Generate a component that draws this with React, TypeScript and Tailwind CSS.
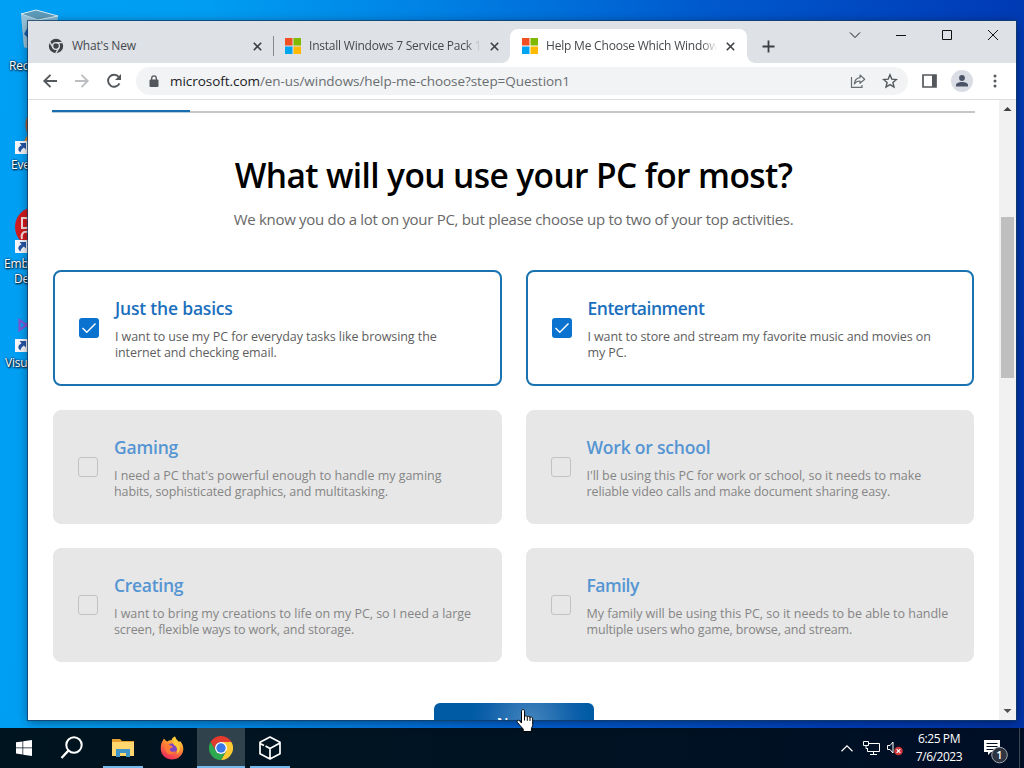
import { ReactNode } from "react";
import clsx from "clsx";

interface Activity {
  title: string;
  lines: string[];
  checked?: boolean;
  titleClass: string;
  lineClasses: string[];
}

const activities: Activity[] = [
  {
    title: "Just the basics",
    lines: ["I want to use my PC for everyday tasks like browsing the", "internet and checking email."],
    checked: true,
    titleClass: "tracking-[-0.2px]",
    lineClasses: ["tracking-[-0.07px]", "tracking-[-0.1px]"],
  },
  {
    title: "Entertainment",
    lines: ["I want to store and stream my favorite music and movies on", "my PC."],
    checked: true,
    titleClass: "tracking-[-0.5px]",
    lineClasses: ["tracking-[-0.1px]", "tracking-[-0.1px]"],
  },
  {
    title: "Gaming",
    lines: ["I need a PC that's powerful enough to handle my gaming", "habits, sophisticated graphics, and multitasking."],
    titleClass: "tracking-[-0.2px]",
    lineClasses: ["tracking-[-0.03px]", "tracking-[-0.11px]"],
  },
  {
    title: "Work or school",
    lines: ["I'll be using this PC for work or school, so it needs to make", "reliable video calls and make document sharing easy."],
    titleClass: "tracking-[-0.2px]",
    lineClasses: ["tracking-[-0.04px]", "tracking-[-0.11px]"],
  },
  {
    title: "Creating",
    lines: ["I want to bring my creations to life on my PC, so I need a large", "screen, flexible ways to work, and storage."],
    titleClass: "tracking-[-0.3px]",
    lineClasses: ["tracking-[-0.02px]", "tracking-[-0.13px]"],
  },
  {
    title: "Family",
    lines: ["My family will be using this PC, so it needs to be able to handle", "multiple users who game, browse, and stream."],
    titleClass: "tracking-[-0.5px]",
    lineClasses: ["tracking-[-0.02px]", "tracking-[-0.15px]"],
  },
];

function MicrosoftLogo() {
  return (
    <svg width="16" height="16" viewBox="0 0 16 16" className="shrink-0">
      <rect width="7.5" height="7.5" fill="#f25022" />
      <rect x="8.5" width="7.5" height="7.5" fill="#7fba00" />
      <rect y="8.5" width="7.5" height="7.5" fill="#00a4ef" />
      <rect x="8.5" y="8.5" width="7.5" height="7.5" fill="#ffb900" />
    </svg>
  );
}

function ChromeMono() {
  return (
    <svg width="16" height="16" viewBox="0 0 16 16" className="shrink-0">
      <circle cx="8" cy="8" r="7.2" fill="#3f4347" />
      <circle cx="8" cy="8" r="3.4" fill="none" stroke="#dee1e6" strokeWidth="1.3" />
      <path d="M8 4.6h6.6M5.05 9.7L1.8 4.1M10.95 9.7L7.7 15.3" stroke="#dee1e6" strokeWidth="1.3" />
    </svg>
  );
}

function ChromeColor() {
  return (
    <svg width="24" height="24" viewBox="0 0 24 24">
      <path d="M12 6H22.4A12 12 0 0 1 12 24L17.2 15Z" fill="#fcc934" />
      <path d="M1.6 6A12 12 0 0 1 22.4 6H12A6 6 0 0 0 6.8 15Z" fill="#e33b2e" />
      <path d="M1.6 6L6.8 15A6 6 0 0 0 17.2 15L12 24A12 12 0 0 1 1.6 6Z" fill="#2da94f" />
      <circle cx="12" cy="12" r="6" fill="#fff" />
      <circle cx="12" cy="12" r="4.7" fill="#3b78e7" />
    </svg>
  );
}

function CloseIcon() {
  return (
    <svg width="9" height="9" viewBox="0 0 9 9" className="shrink-0">
      <path d="M.8.8l7.4 7.4M8.2.8L.8 8.2" stroke="#3c4043" strokeWidth="1.6" />
    </svg>
  );
}

function Tab({ icon, title, className, fade }: { icon: ReactNode; title: ReactNode; className: string; fade?: boolean }) {
  return (
    <div className={clsx("flex items-center h-[34px] text-[12px] text-[#45494d]", className)}>
      {icon}
      <div
        className={clsx(
          "ml-2 flex-1 overflow-hidden whitespace-nowrap",
          fade && "[mask-image:linear-gradient(to_right,black_91%,transparent)]"
        )}
      >
        {title}
      </div>
      <div className="ml-[9px]">
        <CloseIcon />
      </div>
    </div>
  );
}

function TabStrip() {
  return (
    <div className="relative flex h-[42px] bg-[#dee1e6] pt-2">
      <Tab className="w-[245px] pl-5 pr-[11px]" icon={<ChromeMono />} title={<span className="tracking-[-0.22px]">What's New</span>} />
      <div className="mt-[7px] h-5 w-px bg-[#85888d]" />
      <Tab
        className="w-[236px] pl-[11px] pr-[11px]"
        fade
        icon={<MicrosoftLogo />}
        title={<span className="tracking-[-0.22px]">Install Windows 7 Service Pack 1 (SP1)</span>}
      />
      <div className="relative rounded-t-lg bg-white">
        <Tab
          className="w-[237px] pl-3 pr-3"
          fade
          icon={<MicrosoftLogo />}
          title={<span className="tracking-[-0.2px]">Help Me Choose Which Windows</span>}
        />
        <div className="absolute bottom-0 -left-2 size-2 bg-[radial-gradient(circle_at_0_0,transparent_7.5px,white_8px)]" />
        <div className="absolute bottom-0 -right-2 size-2 bg-[radial-gradient(circle_at_100%_0,transparent_7.5px,white_8px)]" />
      </div>
      <svg width="13" height="13" viewBox="0 0 13 13" className="ml-[15px] mt-[11px]">
        <path d="M6.5.5v12M.5 6.5h12" stroke="#3c4043" strokeWidth="1.8" />
      </svg>
      <svg width="160" height="14" viewBox="0 0 160 14" className="ml-[72px] -mt-px" fill="none" stroke="#111">
        <path d="M3 4.5l5 5 5-5" />
        <path d="M49 7.5h10" />
        <path d="M95.5 2.5h9v9h-9z" />
        <path d="M141 2l10 10M151 2l-10 10" />
      </svg>
    </div>
  );
}

function Toolbar() {
  return (
    <div className="flex h-[37px] items-center border-b border-[#dcdee0] bg-white">
      <svg width="80" height="16" viewBox="0 0 80 16" className="ml-[14px] shrink-0" fill="none" strokeWidth="1.9">
        <path d="M15 8H2.5M8.5 1.8L2.3 8l6.2 6.2" stroke="#54585c" />
        <path d="M33 8h12.5M39.5 1.8L45.7 8l-6.2 6.2" stroke="#bcbec1" />
        <path d="M77.5 10.3A6 6 0 1 1 76.8 4" stroke="#54585c" />
        <path d="M79 1v6h-6z" fill="#54585c" stroke="none" />
      </svg>
      <div className="ml-[14px] flex h-7 w-[772px] items-center rounded-full bg-[#f1f3f4] pl-[13px] pr-[10px]">
        <svg width="10" height="13" viewBox="0 0 10 13">
          <rect x=".5" y="4.5" width="9" height="7.5" rx="1" fill="#54585c" />
          <path d="M2.7 5V3.2a2.3 2.3 0 0 1 4.6 0V5" fill="none" stroke="#54585c" strokeWidth="1.3" />
        </svg>
        <div className="ml-[11px] flex-1 whitespace-nowrap text-[13.5px] tracking-[-0.05px] text-[#6a6e72]">
          <span className="text-[#202124]">microsoft.com</span>/en-us/windows/help-me-choose?step=Question1
        </div>
        <svg width="16" height="16" viewBox="0 0 16 16" fill="none" stroke="#6a6e72" strokeWidth="1.2">
          <path d="M1.5 4v10.400H12V12" />
          <path d="M10 2l4.700 4.200L10 10.300V8C7.300 8 5.500 9 4.300 11c.3-3.500 2.200-6 5.700-6.400z" strokeLinejoin="round" />
        </svg>
        <svg width="16" height="16" viewBox="0 0 16 16" className="ml-4" fill="none" stroke="#54585c" strokeWidth="1.4">
          <path d="M8 1.800l1.800 4.300 4.600.4-3.500 3 1.100 4.500L8 11.600 4 14l1.100-4.500-3.500-3 4.600-.4z" />
        </svg>
      </div>
      <svg width="15" height="14" viewBox="0 0 15 14" className="ml-[14px]">
        <path d="M1 1h13v12H1z" fill="none" stroke="#54585c" strokeWidth="1.7" />
        <path d="M10 1h4v12h-4z" fill="#54585c" />
      </svg>
      <div className="ml-[14px] flex size-[22px] items-center justify-center rounded-full bg-[#dadde5]">
        <svg width="14" height="14" viewBox="0 0 14 14" fill="#4b5467">
          <circle cx="7" cy="4" r="2.9" />
          <path d="M1 12.500V11c0-2 3-3 6-3s6 1 6 3v1.500z" />
        </svg>
      </div>
      <svg width="4" height="14" viewBox="0 0 4 14" className="ml-5" fill="#54585c">
        <circle cx="2" cy="2" r="1.5" />
        <circle cx="2" cy="7" r="1.5" />
        <circle cx="2" cy="12" r="1.5" />
      </svg>
    </div>
  );
}

function ActivityCard({ activity }: { activity: Activity }) {
  const { title, lines, checked, titleClass, lineClasses } = activity;

  return (
    <div
      className={clsx(
        "flex items-center gap-4 rounded-lg px-6 py-6",
        checked ? "border-2 border-[#1a73b0] bg-white" : "border border-[#e7e7e7] bg-[#e7e7e7]"
      )}
    >
      {checked ? (
        <div className="flex size-5 shrink-0 items-center justify-center rounded-[3px] bg-[#0a73cf]">
          <svg width="16" height="12" viewBox="0 0 16 12">
            <path d="M1.500 6l4.300 4.300L14.500 1.500" fill="none" stroke="#fff" strokeWidth="1.4" />
          </svg>
        </div>
      ) : (
        <div className="size-5 shrink-0 rounded-[3px] border border-[#c2c2c2]" />
      )}
      <div className="whitespace-nowrap">
        <h2 className={clsx("text-[17.5px]/6 font-semibold", checked ? "text-[#1b6fbd]" : "text-[#5595d3]")}>
          <span className={titleClass}>{title}</span>
        </h2>
        <p className={clsx("-mb-px mt-[9px] text-[12.5px]/4", checked ? "text-[#5e5e5e]" : "text-[#858585]")}>
          {lines.map((line, i) => (
            <span key={line} className={clsx("block w-fit", lineClasses[i])}>
              {line}
            </span>
          ))}
        </p>
      </div>
    </div>
  );
}

function Scrollbar() {
  return (
    <div className="flex w-[17px] shrink-0 flex-col items-center bg-[#f1f1f1]">
      <svg width="17" height="17" viewBox="0 0 17 17">
        <path d="M4.500 11L8.500 7l4 4z" fill="#404040" />
      </svg>
      <div className="mt-[100px] h-[161px] w-[13px] bg-[#bfbfbf]" />
      <svg width="17" height="17" viewBox="0 0 17 17" className="mt-auto">
        <path d="M4.500 6L8.500 10l4-4z" fill="#505050" />
      </svg>
    </div>
  );
}

function BrowserWindow() {
  return (
    <div className="relative ml-7 mr-2 flex h-[699px] flex-col bg-white shadow-[0_0_0_1px_rgba(20,60,100,0.75),0_2px_10px_rgba(0,0,0,0.45)]">
      <TabStrip />
      <Toolbar />
      <div className="flex min-h-0 flex-1">
        <div className="flex-1 overflow-hidden">
          <div className="mx-6 mt-[10px] flex items-end">
            <div className="h-[3px] w-[138px] border-b border-[#b5cde0] bg-[#1b6eae]" />
            <div className="h-[2px] flex-1 bg-[#c6c6c6]" />
          </div>
          <h1 className="mt-10 whitespace-nowrap text-center text-[33.5px]/[44px] font-semibold tracking-[-0.6px] text-black">
            What will you use your PC for most?
          </h1>
          <p className="mt-[10px] whitespace-nowrap text-center text-[15px]/6 tracking-[-0.3px] text-[#686868]">
            We know you do a lot on your PC, but please choose up to two of your top activities.
          </p>
          <div className="mx-[25px] mt-[39px] grid grid-cols-2 gap-6">
            {activities.map((activity) => (
              <ActivityCard key={activity.title} activity={activity} />
            ))}
          </div>
          <div className="ml-[406px] mt-[41px] h-10 w-40 rounded-md bg-[radial-gradient(circle_at_60%_45%,#4585bd_0,#0f60aa_45%,#005ba5_60%)] pt-[7px] text-center text-[15px]/6 font-semibold text-white">
            Next
          </div>
        </div>
        <Scrollbar />
      </div>
    </div>
  );
}

function DesktopLabel({ className, children }: { className: string; children: ReactNode }) {
  return (
    <div
      className={clsx(
        "absolute whitespace-nowrap text-[12px]/[15px] tracking-[-0.2px] text-white [text-shadow:1px_1px_2px_#000,0_0_2px_#003]",
        className
      )}
    >
      {children}
    </div>
  );
}

function ShortcutArrow({ className }: { className: string }) {
  return (
    <svg width="13" height="13" viewBox="0 0 13 13" className={clsx("absolute left-[15px]", className)}>
      <rect width="13" height="13" fill="#f4f6fa" />
      <path d="M4.500 2h6.500v6.500L8.900 6.600C7 7.800 6 9 5.500 11.500 2 9 3 6 6.600 4.200z" fill="#2456a5" />
    </svg>
  );
}

function DesktopIcons() {
  return (
    <>
      <svg width="40" height="48" viewBox="0 0 40 48" className="absolute left-5 top-[9px]">
        <path d="M1 5L16 1l22 6-3 28-20 8-11-5z" fill="#7fb9d8" />
        <path d="M1 5l15-4 22 6-20 4z" fill="#5d9bb9" stroke="#d7edf5" />
        <path d="M1 5l17 6-2 31-12-4z" fill="#9fc7dc" opacity=".8" />
        <path d="M8 18l-4 7 4 4z" fill="#1762b5" />
      </svg>
      <DesktopLabel className="left-[9px] top-[58px]">Recycle Bin</DesktopLabel>
      <svg width="20" height="42" viewBox="0 0 20 42" className="absolute left-[23px] top-[110px]">
        <path d="M6 4C1 10 2 20 5 24l-4 8h14V2z" fill="#b35a27" />
        <path d="M5 24l-4 8h8z" fill="#e88b2c" />
      </svg>
      <ShortcutArrow className="top-[141px]" />
      <DesktopLabel className="left-[11px] top-[157px]">Everything</DesktopLabel>
      <svg width="40" height="40" viewBox="0 0 40 40" className="absolute left-[15px] top-[207px]">
        <circle cx="20" cy="20" r="20" fill="#d01c20" />
        <path d="M7 11h4c5 0 5 10 0 10H7zM13 25c-6-1-7 3-6 7" fill="none" stroke="#f6dada" strokeWidth="2" />
      </svg>
      <ShortcutArrow className="top-[240px]" />
      <DesktopLabel className="left-1 top-[256px]">Embarcadero</DesktopLabel>
      <DesktopLabel className="left-[14px] top-[271px]">Dev-C++</DesktopLabel>
      <svg width="16" height="14" viewBox="0 0 16 14" className="absolute left-[18px] top-[318px]">
        <path d="M1.500 2v10l7-5zM8 7l6-6v12z" fill="none" stroke="#8056d4" strokeWidth="2.2" />
      </svg>
      <ShortcutArrow className="top-[339px]" />
      <DesktopLabel className="left-[5px] top-[355px]">Visual Studio</DesktopLabel>
    </>
  );
}

function TaskbarButton({ children, running, active }: { children: ReactNode; running?: boolean; active?: boolean }) {
  return (
    <div className={clsx("relative flex h-full w-12 items-center justify-center", active && "bg-[#30424c]")}>
      {children}
      {running && <div className={clsx("absolute bottom-0 h-[2px] bg-[#76b9ed]", active ? "w-12" : "w-10")} />}
    </div>
  );
}

function Taskbar() {
  return (
    <div className="mt-2 flex h-10 bg-linear-to-r from-[#00141f] via-[#001322] to-[#000e26] text-white">
      <TaskbarButton>
        <svg width="16" height="16" viewBox="0 0 16 16" fill="#fff">
          <path d="M0 2.300l6.500-.9v6.200H0zM7.200 1.300L16 0v7.600H7.200zM0 8.300h6.500v6.200L0 13.600zM7.200 8.300H16V16l-8.800-1.300z" />
        </svg>
      </TaskbarButton>
      <TaskbarButton>
        <svg width="24" height="24" viewBox="0 0 24 24" fill="none" stroke="#fff" strokeWidth="2">
          <circle cx="14" cy="9" r="7.700" />
          <path d="M8.500 14.500L1.500 22" strokeWidth="2.400" />
        </svg>
      </TaskbarButton>
      <div className="w-[3px]" />
      <TaskbarButton running>
        <svg width="22" height="20" viewBox="0 0 22 20">
          <path d="M0 2.500V1h8l2 2h12v6H0z" fill="#e5a02f" />
          <path d="M0 4h22v14H0z" fill="#ffd76e" />
          <path d="M4 19v-8h14v8h-4v-4H8v4z" fill="#3f94c8" />
        </svg>
      </TaskbarButton>
      <div className="w-px" />
      <TaskbarButton>
        <svg width="24" height="24" viewBox="0 0 24 24">
          <defs>
            <linearGradient id="fox" x1="0.8" y1="0" x2="0.3" y2="1">
              <stop offset="0" stopColor="#fff04a" />
              <stop offset=".4" stopColor="#ff9230" />
              <stop offset="1" stopColor="#f0265c" />
            </linearGradient>
          </defs>
          <path d="M2 6c1-1 1.500-3 2-3.500C5 4 6 5 7.500 5.500 9 4 10 4 11.500 4.300 12 2 13.500 1 15 .500 15.500 3 18 4.500 19 6l1-1c2 2 3.500 5 3.300 8.500C22.800 19.500 18 23.500 12 23.500S1 19 .800 13C.700 10 1 8 2 6z" fill="url(#fox)" />
          <circle cx="12" cy="12.500" r="5" fill="#7a45c9" />
          <path d="M5 9c2-1 4 0 6 .500 1 .5 2 1 1.800 2C10 12 9.500 13 10 14c1 2.500 4 2 5.500 1C14 19 8 19.500 6 15.500 5 13 5 11 5 9z" fill="#ff7b35" />
          <path d="M15 .5c.5 4 5.500 6 5 12 0 3-2 5-3.500 5.500 2-4 .5-7.500-2.500-9-1.500-2-.5-6 1-8.500z" fill="#ffc93a" />
        </svg>
      </TaskbarButton>
      <div className="w-px" />
      <TaskbarButton running active>
        <ChromeColor />
      </TaskbarButton>
      <div className="w-px" />
      <TaskbarButton running>
        <svg width="24" height="24" viewBox="0 0 24 24" fill="none" stroke="#fff" strokeWidth="1.7" strokeLinejoin="round">
          <path d="M12 1l10 5.300v11.400L12 23 2 17.700V6.300zM12 12.500V23M2 7.500l4 2M12 12.500l10-5.500M12 12.500L7.500 10" />
        </svg>
      </TaskbarButton>
      <div className="ml-auto flex items-center">
        <svg width="12" height="7" viewBox="0 0 12 7" fill="none" stroke="#fff" strokeWidth="1.2">
          <path d="M.5 6.300L6 .900l5.500 5.400" />
        </svg>
        <svg width="17" height="15" viewBox="0 0 17 15" className="ml-[10px]" fill="none" stroke="#fff">
          <path d="M6 2.500h10.500v8H4.500V7M10.500 10.500v3M7 13.500h7M.5.5h5v4h-5zM3 4.500v3h1.500" />
        </svg>
        <svg width="16" height="16" viewBox="0 0 16 16" className="ml-[7px]">
          <path d="M.5 5.500h2.500l3-3.500v11L3 9.500H.500z" fill="none" stroke="#fff" />
          <circle cx="11.500" cy="11" r="4.300" fill="#d13438" />
          <path d="M9.700 9.200l3.600 3.600M13.300 9.200l-3.600 3.600" stroke="#fff" strokeWidth="1.2" />
        </svg>
        <div className="ml-[11px] w-[50px] whitespace-nowrap text-center text-[12px]/[18px]">
          <div className="-mx-2 tracking-[-0.4px]">6:25 PM</div>
          <div className="-mx-2 tracking-[-0.45px]">7/6/2023</div>
        </div>
        <svg width="26" height="26" viewBox="0 0 26 26" className="ml-5 mt-2.5">
          <path d="M0 0h16v12H7l-3 3v-3H0z" fill="#fff" />
          <path d="M2.500 3.500h11M2.500 6.500h11M2.500 9.500h7" stroke="#001022" />
          <circle cx="15.500" cy="15" r="7.800" fill="#2e3440" stroke="#a0a4aa" />
          <text x="15.500" y="19" textAnchor="middle" fontSize="11" fontWeight="600" fill="#fff">1</text>
        </svg>
        <div className="ml-[9px] h-10 w-px bg-[#3c4654]" />
        <div className="w-1" />
      </div>
    </div>
  );
}

function HandCursor() {
  return (
    <svg width="18" height="24" viewBox="0 0 18 24" className="absolute left-[516px] top-[709px]">
      <path
        d="M5.500 14V2.200C5.500 0 8.500 0 8.500 2.200V8c0-1.600 2.800-1.500 2.800.300 0-1.500 2.700-1.300 2.700.600 0-1.400 2.700-1.200 2.700.900v5.500c0 2-1 3.200-1.300 4.200V22.500H7.200V20C5 17.500 3 15.500 1.500 13.500c-1.300-1.700.8-3.200 2.300-1.600z"
        fill="#fff"
        stroke="#000"
      />
      <path d="M8.500 7.500v4M11.300 8.300v3.500M14 9v3" stroke="#000" />
    </svg>
  );
}

export default function App() {
  return (
    <div className="relative h-screen w-full overflow-hidden bg-[linear-gradient(100deg,#00a0f4_0%,#009df2_18%,#0085e6_35%,#0058cc_62%,#003db8_85%,#0033a6_100%)] pt-[21px] font-['Open_Sans','Noto_Sans',sans-serif]">
      <DesktopIcons />
      <BrowserWindow />
      <Taskbar />
      <HandCursor />
    </div>
  );
}
